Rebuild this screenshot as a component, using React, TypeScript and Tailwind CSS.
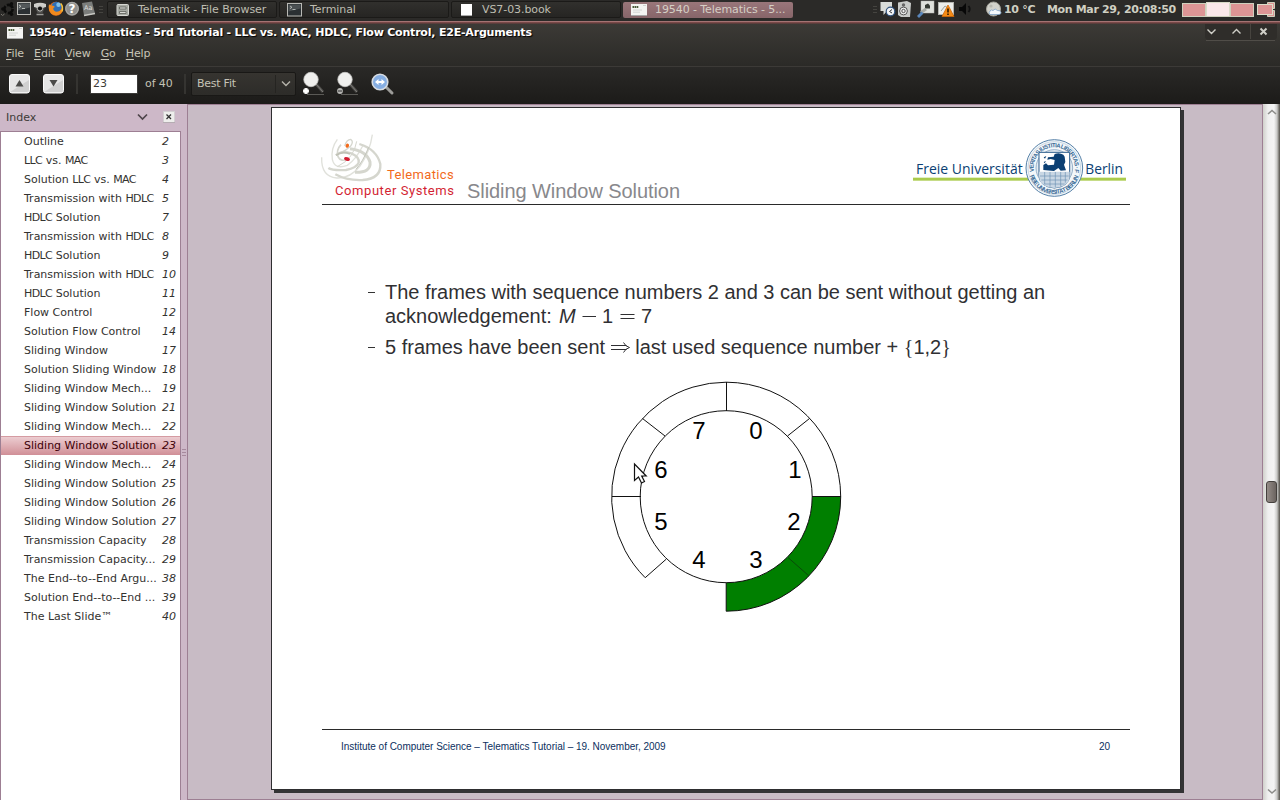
import React from "react";

const outline: [string, number][] = [
  ["Outline", 2],
  ["LLC vs. MAC", 3],
  ["Solution LLC vs. MAC", 4],
  ["Transmission with HDLC", 5],
  ["HDLC Solution", 7],
  ["Transmission with HDLC", 8],
  ["HDLC Solution", 9],
  ["Transmission with HDLC", 10],
  ["HDLC Solution", 11],
  ["Flow Control", 12],
  ["Solution Flow Control", 14],
  ["Sliding Window", 17],
  ["Solution Sliding Window", 18],
  ["Sliding Window Mech...", 19],
  ["Sliding Window Solution", 21],
  ["Sliding Window Mech...", 22],
  ["Sliding Window Solution", 23],
  ["Sliding Window Mech...", 24],
  ["Sliding Window Solution", 25],
  ["Sliding Window Solution", 26],
  ["Sliding Window Solution", 27],
  ["Transmission Capacity", 28],
  ["Transmission Capacity...", 29],
  ["The End--to--End Argu...", 38],
  ["Solution End--to--End ...", 39],
  ["The Last Slide™", 40],
];

function TerminalIcon() {
  return (
    <svg width="16" height="14" viewBox="0 0 16 14" className="shrink-0">
      <rect x="0.5" y="0.5" width="14" height="12.500" fill="#2b3033" stroke="#b9b9b5" />
      <path d="M1.500 1.500h12v4l-12 3z" fill="#4b5052" />
      <path d="M3 3l2 1.300L3 5.600M5.500 6.500h3" stroke="#c8ccc8" fill="none" strokeWidth="0.800" />
    </svg>
  );
}

function DocIcon() {
  return (
    <svg width="16" height="12" viewBox="0 0 16 12" className="shrink-0">
      <rect width="16" height="12" fill="#f4f4f2" />
      <path d="M1.500 3h6" stroke="#4a5a3a" strokeWidth="1.800" strokeDasharray="1.600 .5" />
      <path d="M2 6h9M2 8.200h7M12 1.500h3" stroke="#c9ccc9" strokeWidth="0.800" />
      <path d="M0 11.500h16" stroke="#a8a8a8" />
    </svg>
  );
}

function Launchers() {
  return (
    <svg width="106" height="20" viewBox="0 0 106 20" className="shrink-0">
      <circle cx="8.500" cy="9" r="4.100" fill="none" stroke="#0c0c0b" strokeWidth="2.600" strokeDasharray="7 1.600" />
      <circle cx="2.800" cy="9" r="1.700" fill="#0c0c0b" />
      <circle cx="11.500" cy="3.800" r="1.700" fill="#0c0c0b" />
      <circle cx="11.500" cy="14.200" r="1.700" fill="#0c0c0b" />
      <path d="M1 14l1.500 1.500L4.500 14" stroke="#77756e" fill="none" />
      <rect x="17.500" y="2.500" width="13" height="12" fill="#2b3033" stroke="#b9b9b5" />
      <path d="M18 3.500h12v4l-12 3z" fill="#53585a" />
      <path d="M19 5l2 1.300-2 1.300M22 8.500h3" stroke="#d0d4d0" fill="none" strokeWidth="0.800" />
      <path d="M34 4q6-2.500 12 0v3q-6 2.500-12 0z" fill="#cdcdc9" />
      <path d="M35 7.500l2.500 5.500h5L45 7.500q-5 2.500-10 0z" fill="#4c4c4a" />
      <circle cx="40" cy="8.500" r="2.600" fill="#111" stroke="#c4c4c0" strokeWidth="1" />
      <path d="M36.500 14.500h7" stroke="#9c9c98" strokeWidth="1.500" />
      <circle cx="56" cy="8.800" r="7" fill="#e8701a" />
      <circle cx="56.500" cy="7" r="5.200" fill="#2f6fb5" />
      <circle cx="58.500" cy="4.800" r="2.200" fill="#7fc0e8" />
      <path d="M49 4q1 2 3 1.500 2 0 3 1.500-3 1-1 3.500 2 2 5 .8 4-2 3-7 2 5-.5 8.500Q57.500 17 52 14 47.500 11 49 4z" fill="#f08a1e" />
      <path d="M60.800 3.500q3 4 1 8" stroke="#f6c53a" strokeWidth="1.300" fill="none" />
      <circle cx="72" cy="8.700" r="7" fill="#8f8f8c" />
      <circle cx="72" cy="8.700" r="6.200" fill="none" stroke="#aaaaa7" />
      <text x="72" y="13.200" textAnchor="middle" fontFamily="DejaVu Sans" fontWeight="bold" fontSize="12" fill="#fff">?</text>
      <path d="M82 3l10-1.500 3 12L84 15.500z" fill="#7b7d7b" />
      <path d="M84 15.500l11-2" stroke="#c8c8c4" strokeWidth="1.400" />
      <text x="84" y="10" fontFamily="DejaVu Sans" fontSize="6.500" fill="#dededb">Aa</text>
      <path d="M99 6.500h4M99 9.500h4M99 12.500h4" stroke="#454440" />
    </svg>
  );
}

function Tray() {
  return (
    <svg width="132" height="20" viewBox="872 0 132 20" className="shrink-0">
      <path d="M873 6.500h4M873 9.500h4M873 12.500h4" stroke="#454440" />
      <path d="M880.500 2h11.500v9h-5l-3.500 4v-4h-3z" fill="#d9dcd9" />
      <circle cx="890.500" cy="11.500" r="4.300" fill="#f3f5f7" stroke="#31527d" strokeWidth="1.200" />
      <path d="M892 9.500l-2.500 2 2.500 1.500" stroke="#333" fill="none" />
      <path d="M898 2.500l9-1.500 4 2-1 14-9 0-3-2z" fill="#c9cbc9" />
      <circle cx="903.500" cy="5" r="1.700" fill="#666" />
      <circle cx="903.500" cy="11" r="3.900" fill="#efefef" stroke="#555" />
      <circle cx="903.500" cy="11" r="1.700" fill="none" stroke="#555" />
      <rect x="921" y="1" width="13" height="12" fill="#dfe0dc" stroke="#b5b5b0" strokeWidth="0.500" />
      <path d="M925 5l3-1.500 2 2v3h-5z" fill="#353933" />
      <path d="M926 9l-5 3.500" stroke="#a8aaa4" strokeWidth="3" />
      <path d="M922.500 12.500l-4.500 4.500" stroke="#5a86bb" strokeWidth="2.800" />
      <rect x="938.500" y="2.500" width="15" height="12" fill="#ecedeb" stroke="#b4b4b0" />
      <path d="M941 11l4-5 3 2" stroke="#9ca19c" fill="none" />
      <path d="M948 5l6 11.500h-12z" fill="#f68b16" stroke="#cf6808" strokeWidth="0.800" />
      <path d="M948 8.500v4M948 13.500v1.500" stroke="#2c1700" strokeWidth="1.600" />
      <path d="M959 7h3l4-4v12l-4-4h-3z" fill="#080808" />
      <path d="M968.500 6q2.500 3 0 6" stroke="#111" fill="none" strokeWidth="1.800" />
      <circle cx="993.500" cy="9" r="7" fill="#d2d2cb" stroke="#a4a39a" />
      <circle cx="991" cy="6" r="1.600" fill="#b8b8b0" />
      <path d="M990 14.500q-2-1.500 0-3.500 1-2 3-.5 2-3 4.500 0 3-.5 3.500 2 0 2-2 2z" fill="#f4f8fc" stroke="#7e9fc4" strokeWidth="0.800" />
    </svg>
  );
}

function Pager() {
  return (
    <svg width="98" height="20" viewBox="1182 0 98 20" className="shrink-0">
      <rect x="1182" y="3" width="72" height="14" fill="#cfd0bd" />
      <rect x="1206" y="2" width="24" height="14" fill="#d9dac8" />
      <rect x="1183" y="4" width="22" height="12" fill="#dd9595" />
      <rect x="1207" y="3" width="22" height="13" fill="#fbe8ea" />
      <rect x="1231" y="4" width="22" height="12" fill="#dd9595" />
      <path d="M1267.500 2.500h7v6h-7zM1267.500 10.500h7v6h-7z" fill="#dd9595" stroke="#cfd0bd" />
      <rect x="1257.500" y="4.500" width="15" height="10" fill="#dd9595" stroke="#dcddc9" />
    </svg>
  );
}

function Task({ icon, label, active }: { icon: React.ReactNode; label: string; active?: boolean }) {
  return (
    <div
      className={
        active
          ? "mt-[2px] flex h-[16px] w-[170px] items-center gap-2 rounded-[2px] bg-gradient-to-b from-[#99767a] to-[#876569] pl-[8px] text-[#d5cfc5]"
          : "mt-px flex h-[17px] w-[170px] items-center gap-[7px] rounded-[2px] border border-[#1b1a18] bg-gradient-to-b from-[#31302d] to-[#262523] pl-[7px] text-[#bebdb1]"
      }
    >
      <span className="flex w-4 shrink-0 justify-center">{icon}</span>
      <span className="whitespace-nowrap tracking-[-0.08px]">{label}</span>
    </div>
  );
}

function TopPanel() {
  return (
    <div className="flex h-[21px] shrink-0 items-start bg-[#2b2a28]">
      <Launchers />
      <div className="ml-px flex gap-[2px]">
        <Task
          label="Telematik - File Browser"
          icon={
            <svg width="14" height="14" viewBox="0 0 14 14">
              <rect x="1" y="1.500" width="11.500" height="11" rx="1" fill="#a7aaa3" stroke="#d6d7d2" />
              <path d="M3.500 4h6.500v2H3.500zM3.500 8.500h6.500v2H3.500z" fill="#d9dad5" stroke="#5e605b" strokeWidth="0.800" />
            </svg>
          }
        />
        <Task label="Terminal" icon={<TerminalIcon />} />
        <Task label="VS7-03.book" icon={<span className="-ml-px h-3 w-[11px] border-b border-[#aaa] bg-white" />} />
        <Task label="19540 - Telematics - 5..." icon={<DocIcon />} active />
      </div>
      <div className="ml-auto flex">
        <Tray />
        <div className="flex h-[19px] items-center font-bold text-[#cfcfc2]">
          <span className="w-[43px] whitespace-nowrap tracking-[-0.3px]">10 °C</span>
          <span className="w-[135px] whitespace-nowrap tracking-[-0.35px]">Mon Mar 29, 20:08:50</span>
        </div>
        <Pager />
      </div>
    </div>
  );
}

function TitleAndMenu() {
  return (
    <div className="flex h-[45px] shrink-0 flex-col bg-gradient-to-b from-[#3d3b37] to-[#2b2a27]">
      <div className="h-[3px] border-t border-[#a47373] bg-gradient-to-b from-[#8a4e4e] to-[#4a3836]" />
      <div className="flex h-[18px] items-center">
        <span className="ml-[7px]">
          <DocIcon />
        </span>
        <span className="ml-[6px] whitespace-nowrap font-bold tracking-[-0.2px] text-white [text-shadow:1px_1px_1px_#000]">
          19540 - Telematics - 5rd Tutorial - LLC vs. MAC, HDLC, Flow Control, E2E-Arguments
        </span>
        <svg width="78" height="18" viewBox="1202 24 78 18" className="ml-auto">
          <path d="M1205 24h72v12q0 4-4 4h-64q-4 0-4-4z" fill="#2f2d2a" />
          <path d="M1206 40.500h69" stroke="#504d48" />
          <path d="M1250.500 24v15" stroke="#47443f" />
          <path d="M1207.500 29.500l4 4 4-4M1232.500 33.500l4-4 4 4" fill="none" stroke="#d0cfc8" strokeWidth="1.400" />
          <path d="M1260.500 28.500l6 6M1266.500 28.500l-6 6" stroke="#d0cfc8" strokeWidth="2" />
        </svg>
      </div>
      <div className="flex h-[24px] items-center pl-[6px] text-[#c8c6b8]">
        {["File", "Edit", "View", "Go", "Help"].map((m) => (
          <span key={m} className="mr-[10px] tracking-[-0.1px]">
            <span className="underline underline-offset-2">{m[0]}</span>
            {m.slice(1)}
          </span>
        ))}
      </div>
    </div>
  );
}

function ZoomIcon({ sign }: { sign: "plus" | "minus" }) {
  return (
    <svg width="24" height="26" viewBox="0 0 24 26" className="shrink-0">
      <path d="M14 13l7 8" stroke="#4b4a47" strokeWidth="2.800" />
      <path d="M14 13l7 8" stroke="#8b8a86" strokeWidth="0.800" />
      <path d="M5 23.500h17" stroke="#5a5955" strokeWidth="1" />
      <circle cx="9" cy="8.500" r="7.200" fill="#efefed" stroke="#c9c9c6" strokeWidth="0.800" />
      <circle cx="4" cy="20" r="2.900" fill={sign === "plus" ? "#e2e2e0" : "#b7b7b4"} />
      {sign === "plus" ? (
        <path d="M4 17.300v5.400M1.300 20h5.400" stroke="#fff" strokeWidth="1.800" />
      ) : (
        <path d="M2 20h4" stroke="#444" strokeWidth="1.200" />
      )}
    </svg>
  );
}

function ToolButton({ up }: { up?: boolean }) {
  return (
    <svg width="21" height="20" viewBox="0 0 21 20" className="shrink-0">
      <rect x="0.500" y="0.500" width="20" height="18.500" rx="2.500" fill="#e6e6e6" stroke="#fafafa" />
      <path d="M1 18l19-12v10q0 2-2 2z" fill="#d0d0d0" />
      <path d={up ? "M10.500 6l4 6.500h-8z" : "M10.500 12.500l4-6.500h-8z"} fill="#4b4b49" />
    </svg>
  );
}

function Toolbar() {
  return (
    <div className="flex h-[38px] shrink-0 items-center border-t border-[#3c3a37] bg-gradient-to-b from-[#2a2927] to-[#1c1b19] pb-[4px] text-[#c5c3b6]">
      <span className="ml-[9px] mt-px">
        <ToolButton up />
      </span>
      <span className="ml-[13px] mt-px">
        <ToolButton />
      </span>
      <span className="ml-[12px] h-5 w-[2px] bg-[#353431]" />
      <span className="ml-[12px] flex h-[20px] w-[48px] items-center border border-[#3a3937] bg-white pl-[2px] text-[#3c3b37]">23</span>
      <span className="ml-[7px] w-[30px] whitespace-nowrap tracking-[-0.1px]">of 40</span>
      <span className="ml-[9px] h-5 w-[2px] bg-[#353431]" />
      <div className="ml-[5px] flex h-[24px] w-[105px] items-center rounded-[2px] border border-[#191816] bg-gradient-to-b from-[#363430] to-[#2d2c29] pl-[5px]">
        <span className="tracking-[-0.25px]">Best Fit</span>
        <span className="ml-auto flex h-[18px] w-[20px] items-center justify-center border-l border-[#252421]">
          <svg width="10" height="7" viewBox="0 0 10 7">
            <path d="M1 1.500l4 4 4-4" fill="none" stroke="#b5b3aa" strokeWidth="1.400" />
          </svg>
        </span>
      </div>
      <span className="ml-[6px]">
        <ZoomIcon sign="plus" />
      </span>
      <span className="ml-[10px]">
        <ZoomIcon sign="minus" />
      </span>
      <svg width="24" height="24" viewBox="0 0 24 24" className="ml-[11px]">
        <path d="M15 15l6 6" stroke="#9c9c99" strokeWidth="3" strokeLinecap="round" />
        <circle cx="9" cy="10" r="7.800" fill="#86aee2" stroke="#d7dbe0" strokeWidth="1.600" />
        <path d="M4 10l3.500-3v2h3V7l3.500 3-3.500 3v-2h-3v2z" fill="#fff" />
      </svg>
    </div>
  );
}

function OutlineLabel({ text }: { text: string }) {
  return (
    <span className="w-[138px]">
      {text.split(/(HDLC|LLC|MAC)/).map((part, i) =>
        i % 2 ? (
          <span key={i} className="tracking-[-0.6px]">
            {part}
          </span>
        ) : (
          part
        ),
      )}
    </span>
  );
}

function Sidebar() {
  return (
    <div className="flex w-[187px] shrink-0 bg-[#cdb8c8]">
      <div className="flex w-[181px] flex-col">
        <div className="flex h-[27px] items-center pl-[6px] text-[#3c3b37]">
          <span>Index</span>
          <svg width="11" height="8" viewBox="0 0 11 8" className="mb-px ml-auto">
            <path d="M1 1.500l4.500 4.500L10 1.500" fill="none" stroke="#4e454b" strokeWidth="1.700" />
          </svg>
          <svg width="12" height="12" viewBox="0 0 12 12" className="mb-px ml-[15px] mr-[6px]">
            <rect x="0.500" y="0.500" width="11" height="11" fill="#eeeeec" stroke="#d3cfd2" />
            <path d="M0 11.500h12" stroke="#b5acb2" />
            <path d="M3.500 3.500l4.500 4.500M8 3.500L3.500 8" stroke="#333" strokeWidth="1.300" />
          </svg>
        </div>
        <div className="flex-1 border-x border-t border-[#9d7f93] bg-white text-[#333230]">
          {outline.map(([label, page], i) => (
            <div
              key={i}
              className={
                page === 23
                  ? "flex h-[19px] items-center whitespace-nowrap border-t border-[#d59ba2] bg-gradient-to-b from-[#eccdd1] to-[#d08f97] pb-px pl-[23px] text-[#3d0007]"
                  : "flex h-[19px] items-center whitespace-nowrap pl-[23px]"
              }
            >
              <OutlineLabel text={label} />
              <span className="italic tracking-[-0.1px]">{page}</span>
            </div>
          ))}
        </div>
      </div>
      <div className="flex flex-1 flex-col items-center pt-[345px]">
        <span className="h-px w-1 bg-[#a68a9d]" />
        <span className="mt-[2px] h-px w-1 bg-[#a68a9d]" />
        <span className="mt-[2px] h-px w-1 bg-[#a68a9d]" />
      </div>
    </div>
  );
}

function TelematicsLogo() {
  return (
    <svg width="140" height="70" viewBox="30 30 420 210" className="-ml-[2px] mb-[4px] shrink-0">
      <g fill="none" stroke="#d5d6ce">
        <path d="M35 112Q33 170 80 174Q120 176 150 138Q180 95 187 44" strokeWidth="4" stroke="#e0e1db" />
        <path d="M82 58Q62 85 67 118Q74 150 112 136Q138 118 158 78" strokeWidth="4" stroke="#e0e1db" />
        <path d="M93 74Q78 90 84 110Q92 128 116 116" strokeWidth="5" />
        <path d="M148 72Q200 88 211 132Q214 176 158 180Q110 182 76 163" strokeWidth="7" />
        <path d="M120 86Q170 92 180 126Q184 158 135 157" strokeWidth="9" />
        <path d="M78 106Q92 90 124 100Q150 112 146 128Q140 144 108 150Q66 152 55 144" strokeWidth="7" />
        <path d="M104 78Q110 58 122 58Q132 64 122 78Q108 92 92 98" strokeWidth="4" />
        <path d="M140 64Q136 90 122 108Q110 126 82 140" strokeWidth="3" />
      </g>
      <path d="M176 82Q158 126 138 148" stroke="#c2c4ba" strokeWidth="3" fill="none" />
      <path d="M78 106Q96 92 120 102" stroke="#bfc1b5" strokeWidth="5" fill="none" />
      <ellipse cx="112" cy="77" rx="5" ry="6.500" fill="#f26a1b" transform="rotate(20 112 77)" />
      <ellipse cx="111" cy="117" rx="9" ry="5.500" fill="#d31f33" transform="rotate(20 111 117)" />
      <text x="231" y="176" fontFamily="Roboto" fontSize="39" fill="#f26a1b" textLength="200" lengthAdjust="spacing">Telematics</text>
      <text x="75" y="225" fontFamily="Roboto" fontSize="39" fill="#d31f33" textLength="357" lengthAdjust="spacing">Computer Systems</text>
    </svg>
  );
}

function UniversityLogo() {
  return (
    <svg width="218" height="66" viewBox="36 48 654 198" className="mb-[2px] ml-auto shrink-0">
      <rect x="39" y="173" width="639" height="9" fill="#aacb4c" />
      <g fontFamily="Open Sans" fontSize="45" fill="#0b3f73">
        <text x="48" y="161" textLength="320" lengthAdjust="spacingAndGlyphs">Freie Universität</text>
        <text x="556" y="161" textLength="113" lengthAdjust="spacingAndGlyphs">Berlin</text>
      </g>
      <circle cx="463" cy="144" r="85" fill="#f3f7fa" stroke="#5681a8" strokeWidth="3" />
      <circle cx="463" cy="144" r="79" fill="none" stroke="#b4c7d8" strokeWidth="2" />
      <circle cx="463" cy="144" r="55" fill="#e3ebf2" stroke="#6f92b3" strokeWidth="2" />
      <path id="sealRing" d="M402 155A62 62 0 1 1 524 155M389 166A77 77 0 0 0 537 166" fill="none" />
      <text fontFamily="Liberation Sans" fontWeight="bold" fontSize="18" fill="#3c6c97">
        <textPath href="#sealRing" textLength="412" lengthAdjust="spacing">VERITAS IUSTITIA LIBERTAS · FREIE UNIVERSITÄT BERLIN</textPath>
      </text>
      <path d="M417 97h92v68q0 35-46 39-46-4-46-39z" fill="#fff" stroke="#2c5d8b" strokeWidth="3" />
      <path d="M417 155h92v12q0 33-46 37-46-4-46-37z" fill="#c9d7e4" />
      <path d="M420 168h86M424 180h78M432 192h62M434 156v36M450 156v44M466 156v46M482 156v44M496 156v32" stroke="#6d92b4" strokeWidth="2" />
      <path d="M430 150v-15l8-5 6 6 18-2 2-14-12-3-10 2 2-7 17-2 3-8q14-6 26 2l4 6 2 16-4 8 6 17-16 1-7-8-13 9z" fill="#0b3f73" />
      <path d="M431 112l8-4-4 8zM431 126l7-3-4 7z" fill="#0b3f73" />
    </svg>
  );
}

function RingDiagram() {
  const digits: [string, number, number][] = [
    ["7", 699, 439], ["0", 756, 439], ["6", 661, 478], ["1", 795, 478],
    ["5", 661, 530], ["2", 794, 530], ["4", 699, 568], ["3", 756, 568],
  ];
  return (
    <svg width="240" height="240" viewBox="606 376 240 240">
      <path d="M812.200 496.700H840.700A114.500 114.500 0 0 1 726.200 611.200V582.700A86 86 0 0 0 812.200 496.700z" fill="#007f00" />
      <g fill="none" stroke="#111" strokeWidth="1">
        <circle cx="726.200" cy="496.700" r="86" />
        <path d="M645.200 577.700A114.500 114.500 0 0 1 726.200 382.200A114.500 114.500 0 0 1 840.700 496.700A114.500 114.500 0 0 1 726.200 611.200V582.700" />
        <path d="M726.500 382v29M809.500 418.500l-22 17.500M812 496.500h29M645.200 577.700l21-18.500M612 496.500h29M642.500 418.500l22.500 17.500" />
        <path d="M788 557.500l20.500 18" stroke="#0a4a0a" />
      </g>
      <g fontFamily="Liberation Sans" fontSize="24" fill="#000" textAnchor="middle">
        {digits.map(([d, x, y]) => (
          <text key={d} x={x} y={y}>{d}</text>
        ))}
      </g>
      <path d="M634.500 464v16.500l4-3.500 3 6 3-1.500-2.800-5.500h4.500z" fill="#fff" stroke="#111" strokeWidth="1.200" />
    </svg>
  );
}

function Slide() {
  return (
    <div className="ml-[83px] mt-[2px] flex h-[683px] w-[910px] flex-col border border-[#2e2e30] bg-white px-[50px] font-['Liberation_Sans',sans-serif] shadow-[3px_3px_0_0_#333335]">
      <div className="flex h-[97px] shrink-0 items-end border-b border-[#2a2a2a]">
        <TelematicsLogo />
        <span className="mb-px ml-[7px] whitespace-nowrap text-[20px] leading-[24px] tracking-[-0.07px] text-[#88888c]">Sliding Window Solution</span>
        <UniversityLogo />
      </div>
      <div className="mt-[75px] flex flex-col gap-[7px] pl-[46px] text-[20px] leading-[24px] text-[#303033]">
        <div className="flex">
          <span className="mt-[12px] h-px w-[7px] bg-[#333]" />
          <div className="ml-[10px] whitespace-nowrap">
            <div className="tracking-[-0.02px]">The frames with sequence numbers 2 and 3 can be sent without getting an</div>
            <div className="flex">
              <span className="w-[174px]">acknowledgement:</span>
              <i className="w-[22px]">M</i>
              <svg width="21" height="24" viewBox="0 0 21 24">
                <path d="M1.500 12.500h13.500" stroke="#303033" />
              </svg>
              <span className="w-[17px]">1</span>
              <svg width="22" height="24" viewBox="0 0 22 24">
                <path d="M1.500 10.500h14M1.500 14.500h14" stroke="#303033" />
              </svg>
              <span>7</span>
            </div>
          </div>
        </div>
        <div className="flex">
          <span className="mt-[12px] h-px w-[7px] bg-[#333]" />
          <div className="ml-[10px] flex whitespace-pre">
            <span>5 frames have been sent </span>
            <svg width="19" height="24" viewBox="0 0 19 24">
              <path d="M0 10.500H15.500M0 14.500H15.500M12.500 7.500q2 4 6 5-4 1-6 5" fill="none" stroke="#303033" strokeWidth="1" />
            </svg>
            <span>
              {" last used sequence number + "}
              <span className="font-['Liberation_Serif',serif]">{"{"}</span>
              1,2
              <span className="font-['Liberation_Serif',serif]">{"}"}</span>
            </span>
          </div>
        </div>
      </div>
      <div className="ml-[284px] mt-[17px]">
        <RingDiagram />
      </div>
      <div className="mb-[31px] mt-auto flex h-[29px] items-center justify-between border-t border-[#2a2a2a] pl-[19px] pr-[20px] pt-[6px] text-[10px] tracking-[-0.02px] text-[#0b2f5e]">
        <span className="whitespace-nowrap">Institute of Computer Science – Telematics Tutorial – 19. November, 2009</span>
        <span>20</span>
      </div>
    </div>
  );
}

function Scrollbar() {
  return (
    <div className="flex w-[17px] shrink-0 flex-col items-center bg-[linear-gradient(90deg,#d0d0cb_0,#efefef_5px,#f4f4f4_11px,#c9c9c7_14px,#77756f_16px,#55534e_17px)] py-[5px]">
      <svg width="10" height="7" viewBox="0 0 10 7">
        <path d="M1 5l4-3.500L9 5" fill="none" stroke="#8d8d8a" strokeWidth="1.600" />
      </svg>
      <div className="mt-[365px] h-[22px] w-[11px] shrink-0 rounded-[3px] border border-[#44403d] bg-gradient-to-r from-[#958d88] to-[#6b6460]" />
      <svg width="10" height="7" viewBox="0 0 10 7" className="mt-auto">
        <path d="M1 1.500l4 3.500 4-3.500" fill="none" stroke="#8d8d8a" strokeWidth="1.600" />
      </svg>
    </div>
  );
}

export default function App() {
  return (
    <div className="flex h-[800px] w-[1280px] flex-col overflow-hidden font-['DejaVu_Sans',sans-serif] text-[11px] leading-[14px]">
      <TopPanel />
      <TitleAndMenu />
      <Toolbar />
      <div className="flex min-h-0 flex-1">
        <Sidebar />
        <div className="flex-1 border border-[#9d7f93] bg-[#c8bbc5]">
          <Slide />
        </div>
        <Scrollbar />
      </div>
    </div>
  );
}
